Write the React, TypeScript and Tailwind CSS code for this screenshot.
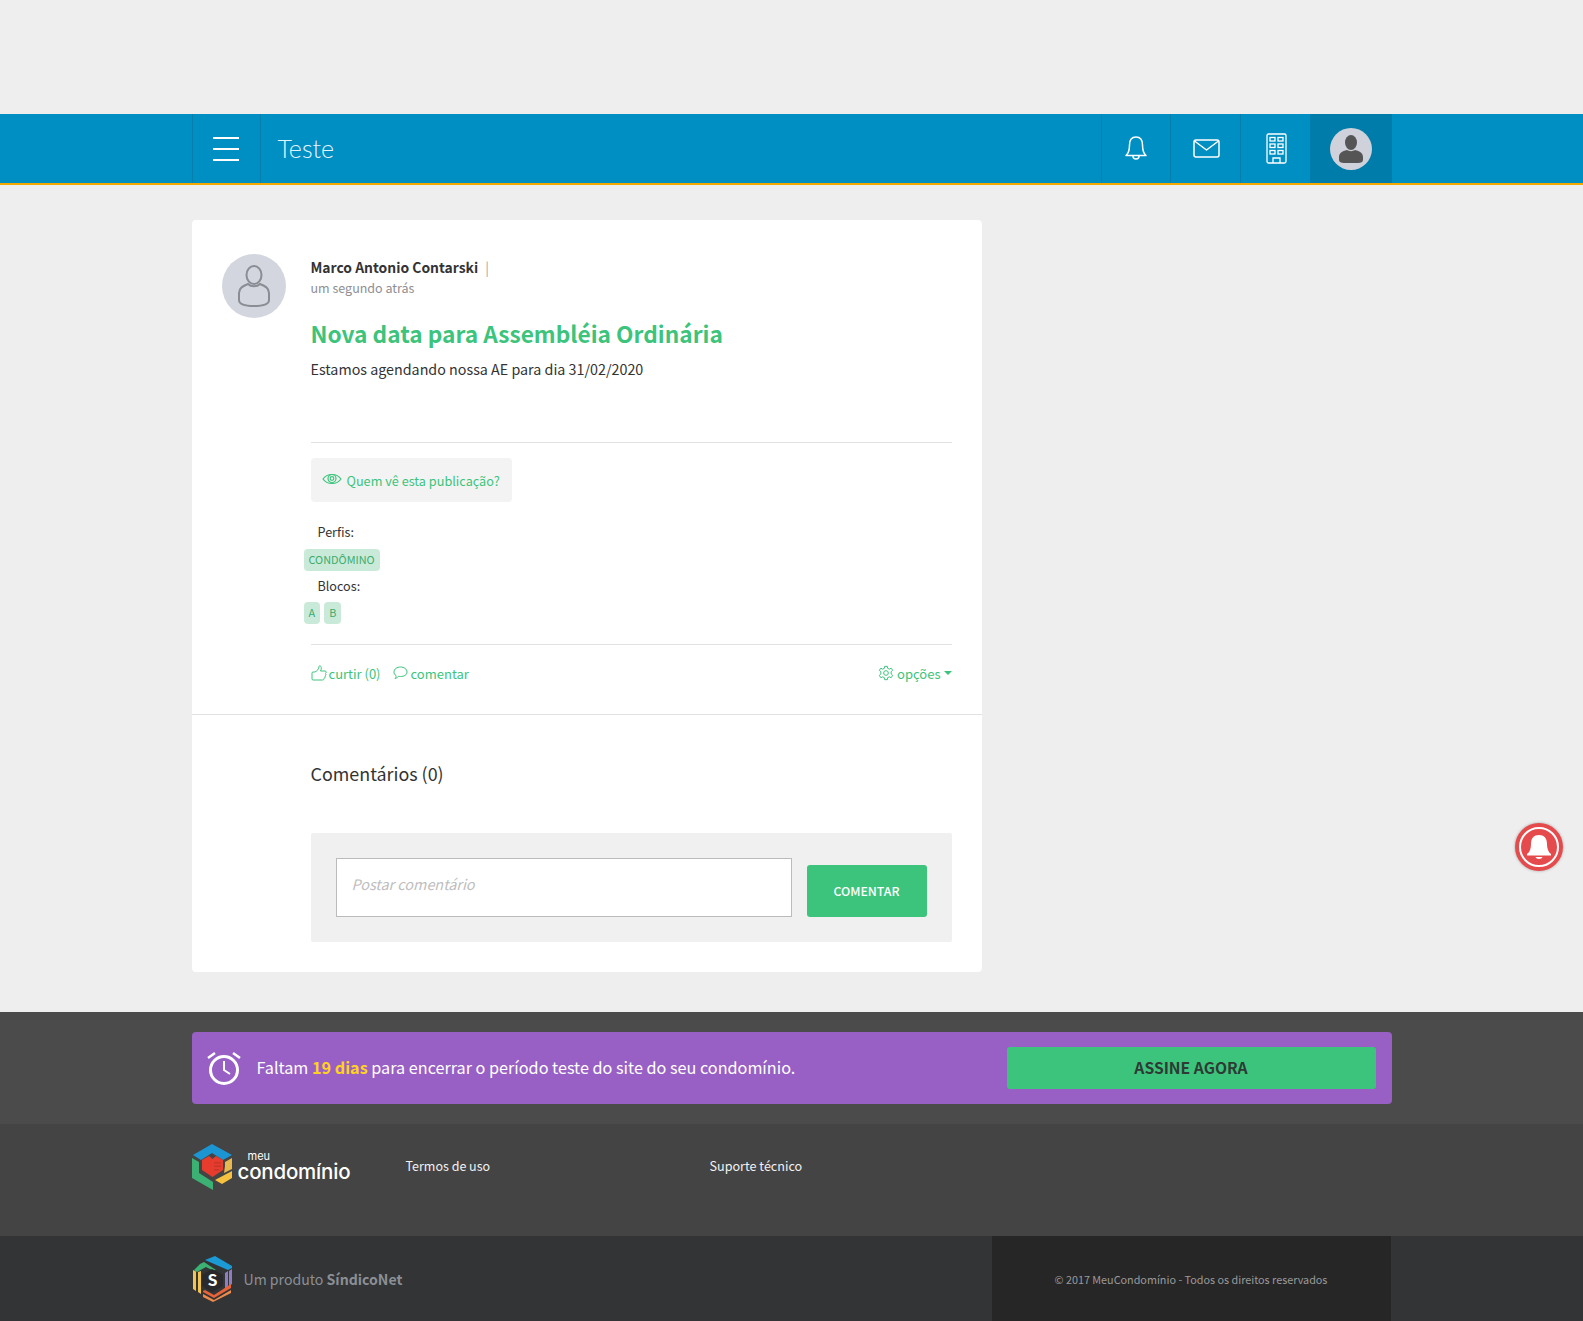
import React from "react";

const font = { fontFamily: '"Noto Sans CJK SC", "Noto Sans", sans-serif' };

function Hexo() {
  return (
    <svg width="41" height="46" viewBox="0 0 41 46" className="shrink-0">
      <path d="M20 0 L40 11 L31 16 L20 9 L9 16 L1 11 Z" fill="#1c95d3" />
      <path d="M0 14 L7 18 L7 29 L21 38 L21 46 L0 34 Z" fill="#3bb273" />
      <path d="M40 14 L40 25 L32 29 L33 22 L33 18 Z" fill="#e6b84f" />
      <path d="M40 27 L40 34 L30 40 L23 36 Z" fill="#f5c13f" />
      <path d="M20.500 15 L24 12 L31 16 L31 26 L20.500 33 L10 26 L10 16 L17 12 Z" fill="#e53c2e" />
      <path d="M22 18h7v1.500h-7zM22 21.500h7v1.500h-7zM22 25h5v1.500h-5z" fill="#c9352a" />
    </svg>
  );
}

function Sindico() {
  return (
    <svg width="41" height="46" viewBox="0 0 41 46" fill="none" className="shrink-0">
      <path d="M13 4 L23 0 L40 10 L40 12 L36 14 Z" fill="#1c9ad6" />
      <path d="M8 8 L12 6 L24 14 L20 14 L14 11 L5 16 L2 14 Z" fill="#3bb273" />
      <path d="M1 14 L4 15.500 L4 35 L1 33 Z M6 16 L9 15 L9 38 L6 36 Z" fill="#f3c350" />
      <path d="M37 15 L40 13 L40 28 L37 30 Z M33 17 L36 15 L36 31 L33 33 Z" fill="#8f7cc3" />
      <path d="M11 35 L13 34 L22 39 L39 28 L39 32 L22 42 L11 36 Z" fill="#e8633a" />
      <path d="M11 38 L22 44 L39 34 L39 37 L21 46 L11 41 Z" fill="#ef8a4a" />
      <path d="M20 13 L31 19 L31 30 L20 36 L10 30 L10 19 Z" fill="#2a2a2c" />
      <text x="20.500" y="30" textAnchor="middle" fontSize="16" fontWeight="700" fill="#fff" style={font}>S</text>
    </svg>
  );
}

function Tag({ children }: { children: React.ReactNode }) {
  return (
    <span className="h-[22px] rounded-[4px] bg-[#c9ead8] px-[5px] text-[10.900px] leading-[21px] text-[#3dab6f]">
      {children}
    </span>
  );
}

export default function App() {
  return (
    <div className="min-h-[1321px] overflow-hidden bg-[#eeeeee] text-[#333]" style={font}>
      <div className="h-[114px]" />

      <header className="h-[71px] border-b-2 border-[#f5a800] bg-[#008fc3]">
        <div className="mx-auto flex h-[69px] w-[1200px] items-stretch">
          <div className="flex w-[69px] items-center justify-center border-x border-[#0580ad]">
            <div className="flex flex-col gap-[9px]">
              <span className="block h-[2px] w-[26px] bg-white" />
              <span className="block h-[2px] w-[26px] bg-white" />
              <span className="block h-[2px] w-[26px] bg-white" />
            </div>
          </div>
          <div className="flex-1 pl-[17px] text-[25px] font-light leading-[69px] text-[#e4f4fb]" style={{ fontFamily: '"Lato", sans-serif', fontWeight: 300 }}>
            Teste
          </div>
          <div className="flex w-[69px] items-center justify-center border-l border-[#0580ad]">
            <svg width="24" height="26" viewBox="0 0 24 26" fill="none" stroke="#fff" strokeWidth="1.500" strokeLinejoin="round" className="-mt-[1px]">
              <path d="M2 20.500 C5 18 5.500 15 5.500 10 C5.500 5 8 2 12 2 C16 2 18.500 5 18.500 10 C18.500 15 19 18 22 20.500 Z" />
              <path d="M9 21 C9 25 15 25 15 21" />
            </svg>
          </div>
          <div className="flex w-[70px] items-center justify-center border-l border-[#0580ad]">
            <svg width="27" height="19" viewBox="0 0 27 19" fill="none" stroke="#fff" strokeWidth="1.500" strokeLinejoin="round" className="ml-[2px] -mt-[1px]">
              <rect x="1" y="1" width="25" height="17" rx="2" />
              <path d="M1.500 2 L13.500 11 L25.500 2" />
            </svg>
          </div>
          <div className="flex w-[70px] items-center justify-center border-l border-[#0580ad]">
            <svg width="21" height="31" viewBox="0 0 21 31" fill="none" stroke="#fff" strokeWidth="1.300" className="ml-[2px]">
              <rect x="1" y="1" width="19" height="29" rx="1.500" />
              <rect x="4" y="4.500" width="5" height="3.500" />
              <rect x="12" y="4.500" width="5" height="3.500" />
              <rect x="4" y="11" width="5" height="3.500" />
              <rect x="12" y="11" width="5" height="3.500" />
              <rect x="4" y="17.500" width="5" height="3.500" />
              <rect x="12" y="17.500" width="5" height="3.500" />
              <path d="M7 30 V25 H14 V30" />
            </svg>
          </div>
          <div className="flex w-[82px] items-center justify-center bg-[#007cab]">
            <div className="flex h-[42px] w-[42px] items-center justify-center rounded-full bg-[#cfd2da]">
              <svg width="24" height="28" viewBox="0 0 24 28" fill="#555">
                <ellipse cx="12" cy="7.500" rx="6" ry="7.500" />
                <path d="M8 15 C3 16 0 18.500 0 22 V25 C0 27 2 28 5 28 H19 C22 28 24 27 24 25 V22 C24 18.500 21 16 16 15 C14 16.500 10 16.500 8 15 Z" />
              </svg>
            </div>
          </div>
        </div>
      </header>

      <main className="mx-auto mt-[35px] h-[752px] w-[1200px]">
        <section className="w-[790px] rounded-[4px] bg-white">
          <div className="flex h-[495px] border-b border-[#e2e2e2] pl-[30px] pr-[30px] pt-[34px]">
            <div className="flex h-16 w-16 shrink-0 items-center justify-center rounded-full bg-[#d3d6de]">
              <svg width="32" height="42" viewBox="0 0 32 42" fill="none" stroke="#8b8d94" strokeWidth="2">
                <ellipse cx="16" cy="10" rx="7.500" ry="9" />
                <path d="M10 19 C5 21 1 23 1 28 V35 C1 39 6 41 16 41 C26 41 31 39 31 35 V28 C31 23 27 21 22 19 C19 22 13 22 10 19 Z" />
              </svg>
            </div>
            <div className="ml-[25px] mt-[3px] flex-1">
              <div className="text-[13.900px] font-bold leading-5 text-[#333]">
                Marco Antonio Contarski <span className="ml-1 font-normal text-[#a8a8a8]">|</span>
              </div>
              <div className="text-[12.500px] leading-[21px] text-[#8e8e93]">um segundo atrás</div>
              <h1 className="mt-[19px] whitespace-nowrap text-[22.700px] font-bold leading-[34px] text-[#3cc47c]">Nova data para Assembléia Ordinária</h1>
              <p className="mt-[6px] text-[14.300px] leading-6 text-[#333]">Estamos agendando nossa AE para dia 31/02/2020</p>
              <div className="mt-[61px] border-t border-[#e2e2e2] pt-[15px]">
                <div className="flex h-[44px] w-[201px] items-center gap-[5px] whitespace-nowrap rounded-[4px] bg-[#f3f3f3] pl-[11px] text-[12.700px] leading-5 text-[#3cc47c]">
                  <svg width="20" height="14" viewBox="0 0 20 14" fill="none" stroke="#3cc47c" strokeWidth="1.200" className="-mt-[3px] shrink-0">
                    <path d="M1 7 C5 1 15 1 19 7 C15 13 5 13 1 7 Z" />
                    <circle cx="10" cy="6.500" r="4" />
                    <circle cx="10" cy="6.500" r="1.800" />
                  </svg>
                  <span className="mt-[2px]">Quem vê esta publicação?</span>
                </div>
                <div className="-ml-[7px] mt-[19px]">
                  <div className="pl-[14px] text-[12.600px] leading-[22px]">Perfis:</div>
                  <div className="mt-[6px] flex h-[22px]"><Tag>CONDÔMINO</Tag></div>
                  <div className="mt-[4px] pl-[14px] text-[12.600px] leading-[22px]">Blocos:</div>
                  <div className="mt-[5px] flex h-[22px] gap-1"><Tag>A</Tag><Tag>B</Tag></div>
                </div>
                <div className="mt-5 flex items-center justify-between border-t border-[#e2e2e2] pt-[19px] text-[13px] leading-5 text-[#3cc47c]">
                  <div className="flex items-center">
                    <svg width="16" height="16" viewBox="0 0 16 16" fill="none" stroke="#3cc47c" strokeWidth="1" className="mr-[2px] -mt-[2px]">
                      <path d="M1 8 C1 7.300 1.500 7 2 7 H4 C6 6 8 4 8 1.500 C8 .5 10 .5 10.300 2.500 C10.500 4 10 5 9.500 6 H14 C15.500 6 15.500 8 14.500 8.500 C15.300 9.500 15 10.500 14 11 C14.500 12 14 13 13 13.300 C13.300 14.300 12.500 15 11.500 15 H2 C1.500 15 1 14.700 1 14 Z" />
                    </svg>
                    <span>curtir (0)</span>
                    <svg width="15" height="14" viewBox="0 0 15 14" fill="none" stroke="#3cc47c" strokeWidth="1" className="ml-3 mr-[3px] -mt-[2px]">
                      <path d="M7.500 1 C11 1 14 3 14 6 C14 9 11 10.500 7.500 10.500 C6.500 10.500 6 10.500 5.500 10.300 C4.500 11.500 3 12.500 2 12.500 C3 11.500 3.300 10.500 3 9.500 C1.500 8.700 1 7.300 1 6 C1 3 4 1 7.500 1 Z" />
                    </svg>
                    <span>comentar</span>
                  </div>
                  <div className="flex items-center">
                    <svg width="16" height="16" viewBox="0 0 24 24" fill="none" stroke="#3cc47c" strokeWidth="1.500" className="mr-[3px] -mt-[2px]">
                      <circle cx="12" cy="12" r="3.500" />
                      <path d="M10 2 H14 L14.500 5 L17 6.200 L19.800 4.800 L22 8 L19.700 10 V13.500 L22 15.500 L19.800 19 L17 17.800 L14.500 19 L14 22 H10 L9.500 19 L7 17.800 L4.200 19 L2 15.500 L4.300 13.500 V10 L2 8 L4.200 4.800 L7 6.200 L9.500 5 Z" />
                    </svg>
                    <span>opções</span>
                    <span className="mb-[3px] ml-[3px] h-0 w-0 border-x-[4px] border-t-[4px] border-x-transparent border-t-[#3cc47c]" />
                  </div>
                </div>
              </div>
            </div>
          </div>

          <div className="h-[257px] pl-[119px] pr-[30px] pt-[44px]">
            <h2 className="text-[17.900px] leading-[28px] text-[#333]">Comentários (0)</h2>
            <div className="mt-[46px] flex h-[109px] items-start gap-[15px] rounded-[2px] bg-[#f0f0f0] p-[25px]">
              <div className="flex h-[59px] flex-1 items-center border border-[#bbb] bg-white pb-[8px] pl-[15px] text-[14.400px] italic text-[#bdbdbd]">
                Postar comentário
              </div>
              <button className="mt-[7px] h-[52px] w-[120px] rounded-[3px] bg-[#3cc47c] text-[12.300px] font-medium uppercase text-white">
                Comentar
              </button>
            </div>
          </div>
        </section>
      </main>

      <div className="mt-[40px] h-[112px] bg-[#4b4b4b] pt-[20px]">
        <div className="mx-auto flex h-[72px] w-[1200px] items-center rounded-[4px] bg-[#9860c4] pl-[15px] pr-4">
          <svg width="34" height="34" viewBox="0 0 34 34" fill="none" stroke="#fff" strokeWidth="2.500" className="shrink-0">
            <circle cx="17" cy="19" r="13.500" strokeWidth="3" />
            <path d="M17 10 V19 L23 23" strokeWidth="2" />
            <path d="M1 7 L8 2 M33 7 L26 2" />
          </svg>
          <p className="mb-[2px] ml-4 flex-1 text-[16.200px] leading-6 text-white">
            Faltam <b className="font-bold text-[#ffd21f]">19 dias</b> para encerrar o período teste do site do seu condomínio.
          </p>
          <button className="mb-[2px] h-[42px] w-[369px] translate-y-[1px] rounded-[3px] bg-[#3cc47c] text-[15.700px] font-bold uppercase text-[#2e3a34]">
            Assine agora
          </button>
        </div>
      </div>

      <footer>
        <div className="h-[112px] bg-[#444444] pt-[20px]">
          <div className="mx-auto flex w-[1200px] items-start">
            <Hexo />
            <div className="ml-[5px] flex w-[121px] flex-col text-white" style={{ fontFamily: '"Inter", sans-serif' }}>
              <span className="ml-[10px] mt-[8px] h-[9px] text-[11px] leading-[9px]">meu</span>
              <span className="mt-[1px] text-[20.500px] font-medium leading-[19px] tracking-[-0.2px]">condomínio</span>
            </div>
            <a className="ml-[47px] mt-[12px] w-[304px] text-[12.500px] leading-5 text-[#f2f2f2]">Termos de uso</a>
            <a className="mt-[12px] text-[12.600px] leading-5 text-[#f2f2f2]">Suporte técnico</a>
          </div>
        </div>
        <div className="h-[85px] bg-[#333436]">
          <div className="mx-auto flex h-[85px] w-[1200px] items-stretch">
            <div className="flex w-[800px] items-center">
              <Sindico />
              <span className="ml-[11px] mt-[3px] text-[14.100px] text-[#8b8f95]">
                Um produto <b className="font-bold">SíndicoNet</b>
              </span>
            </div>
            <div className="flex w-[399px] items-center justify-center bg-[#262627] pt-[1px] text-[10.800px] text-[#9a9a9a]">
              © 2017 MeuCondomínio - Todos os direitos reservados
            </div>
          </div>
        </div>
      </footer>

      <div className="fixed left-[1515px] top-[823px] flex h-12 w-12 items-center justify-center rounded-full bg-[#e54b4d] shadow-[0_0_3px_rgba(0,0,0,0.3)]">
        <div className="flex h-[40px] w-[40px] items-center justify-center rounded-full border-2 border-white">
          <svg width="24" height="26" viewBox="0 0 24 26" fill="#fff">
            <path d="M0 20 C3 18 4 14 4 10 C4 4 7 1 12 1 C17 1 20 4 20 10 C20 14 21 18 24 20 V21.500 H0 Z" />
            <path d="M8.500 23 H15.500 C15 25.500 9 25.500 8.500 23 Z" />
          </svg>
        </div>
      </div>
    </div>
  );
}
